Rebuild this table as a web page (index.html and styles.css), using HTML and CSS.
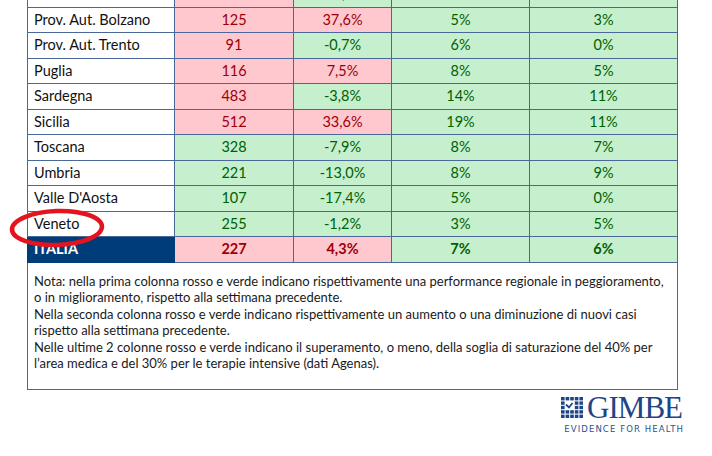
FILE: index.html
```html
<!DOCTYPE html>
<html lang="it">
<head>
<meta charset="utf-8">
<link rel="stylesheet" href="styles.css">
</head>
<body>
<div class="page">
  <table class="data">
    <colgroup>
      <col class="c1"><col class="c2"><col class="c3"><col class="c4"><col class="c5">
    </colgroup>
    <tbody>
      <tr><td class="name">Piemonte</td><td class="bad">81</td><td class="good">-16,1%</td><td class="good">2%</td><td class="good">1%</td></tr>
      <tr><td class="name">Prov. Aut. Bolzano</td><td class="bad">125</td><td class="bad">37,6%</td><td class="good">5%</td><td class="good">3%</td></tr>
      <tr><td class="name">Prov. Aut. Trento</td><td class="bad">91</td><td class="good">-0,7%</td><td class="good">6%</td><td class="good">0%</td></tr>
      <tr><td class="name">Puglia</td><td class="bad">116</td><td class="bad">7,5%</td><td class="good">8%</td><td class="good">5%</td></tr>
      <tr><td class="name">Sardegna</td><td class="bad">483</td><td class="good">-3,8%</td><td class="good">14%</td><td class="good">11%</td></tr>
      <tr><td class="name">Sicilia</td><td class="bad">512</td><td class="bad">33,6%</td><td class="good">19%</td><td class="good">11%</td></tr>
      <tr><td class="name">Toscana</td><td class="good">328</td><td class="good">-7,9%</td><td class="good">8%</td><td class="good">7%</td></tr>
      <tr><td class="name">Umbria</td><td class="good">221</td><td class="good">-13,0%</td><td class="good">8%</td><td class="good">9%</td></tr>
      <tr><td class="name">Valle D'Aosta</td><td class="good">107</td><td class="good">-17,4%</td><td class="good">5%</td><td class="good">0%</td></tr>
      <tr><td class="name veneto">Veneto<svg class="circle" width="100" height="44" viewBox="0 0 100 44"><ellipse cx="50" cy="22" rx="45" ry="17" fill="none" stroke="#e3141d" stroke-width="4.5" transform="rotate(-2 50 22)"/></svg></td><td class="good">255</td><td class="good">-1,2%</td><td class="good">3%</td><td class="good">5%</td></tr>
      <tr class="total"><td class="name italia">ITALIA</td><td class="bad">227</td><td class="bad">4,3%</td><td class="good">7%</td><td class="good">6%</td></tr>
    </tbody>
  </table>
  <div class="note">
    <p>Nota: nella prima colonna rosso e verde indicano rispettivamente una performance regionale in peggioramento, o in miglioramento, rispetto alla settimana precedente.</p>
    <p>Nella seconda colonna rosso e verde indicano rispettivamente un aumento o una diminuzione di nuovi casi rispetto alla settimana precedente.</p>
    <p>Nelle ultime 2 colonne rosso e verde indicano il superamento, o meno, della soglia di saturazione del 40% per l’area medica e del 30% per le terapie intensive (dati Agenas).</p>
  </div>
  <div class="logo-row">
    <div class="logo">
      <div class="logo-top">
        <svg class="logo-icon" width="23" height="22" viewBox="0 0 23 22">
          <g fill="#1d4688">
            <rect x="0" y="0" width="3.6" height="3.4"/><rect x="4.6" y="0" width="3.6" height="3.4"/><rect x="9.2" y="0" width="3.6" height="3.4"/><rect x="13.8" y="0" width="3.6" height="3.4"/><rect x="18.4" y="0" width="3.6" height="3.4"/>
            <rect x="0" y="4.4" width="3.6" height="3.4"/><rect x="13.8" y="4.4" width="3.6" height="3.4"/><rect x="18.4" y="4.4" width="3.6" height="3.4"/>
            <rect x="0" y="8.8" width="3.6" height="3.4"/><rect x="13.8" y="8.8" width="3.6" height="3.4"/><rect x="18.4" y="8.8" width="3.6" height="3.4"/>
            <rect x="0" y="13.2" width="3.6" height="3.4"/><rect x="4.6" y="13.2" width="3.6" height="3.4"/><rect x="9.2" y="13.2" width="3.6" height="3.4"/><rect x="13.8" y="13.2" width="3.6" height="3.4"/><rect x="18.4" y="13.2" width="3.6" height="3.4"/>
            <rect x="0" y="17.6" width="3.6" height="3.4"/><rect x="4.6" y="17.6" width="3.6" height="3.4"/><rect x="9.2" y="17.6" width="3.6" height="3.4"/><rect x="13.8" y="17.6" width="3.6" height="3.4"/><rect x="18.4" y="17.6" width="3.6" height="3.4"/>
          </g>
          <path d="M5 7.5 L8 10.5 L11.5 6" fill="none" stroke="#1d4688" stroke-width="1.8"/>
        </svg>
        <span class="logo-word">GIMBE</span>
      </div>
      <div class="logo-tag">EVIDENCE FOR HEALTH</div>
    </div>
  </div>
</div>
</body>
</html>
```
FILE: styles.css
```css
html, body {
  margin: 0;
  padding: 0;
  background: #ffffff;
}
body {
  width: 712px;
  height: 456px;
  overflow: hidden;
  font-family: Lato, "Open Sans", sans-serif;
}
.page {
  padding-left: 27px;
  width: 650px;
}
.data {
  border-collapse: collapse;
  table-layout: fixed;
  width: 651px;
  margin-top: -19px;
  font-size: 14.5px;
}
.c1 { width: 147px; }
.c2 { width: 119px; }
.c3 { width: 98px; }
.c4 { width: 138px; }
.c5 { width: 148px; }
.data tr {
  height: 25.5px;
}
.data td {
  border: 1px solid #48699a;
  padding: 0 6px;
  text-align: center;
  line-height: 18px;
  white-space: nowrap;
}
.data td.name {
  text-align: left;
  color: #111111;
  background: #ffffff;
}
.data td.bad {
  background: #ffc7ce;
  color: #9c0006;
}
.data td.good {
  background: #c6efce;
  color: #006100;
}
.total td {
  font-weight: 700;
}
.data td.italia {
  background: #003c78;
  color: #ffffff;
  border-color: #003c78;
  line-height: 18px;
}
.veneto {
  position: relative;
}
.circle {
  position: absolute;
  left: -21px;
  top: -6px;
}
.note {
  box-sizing: border-box;
  width: 651px;
  height: 127px;
  border: 1px solid #48699a;
  border-top: none;
  padding: 10px 6px 0 6px;
  font-size: 13px;
  line-height: 16.6px;
  color: #1a1a1a;
}
.note p {
  margin: 0;
}
.logo-row {
  display: flex;
  justify-content: flex-end;
  width: 656px;
  margin-top: 5px;
}
.logo {
  display: flex;
  flex-direction: column;
  align-items: flex-end;
}
.logo-top {
  display: flex;
  align-items: flex-end;
  gap: 3px;
  height: 26px;
}
.logo-icon {
  margin-bottom: 2px;
}
.logo-word {
  font-family: "Liberation Serif", serif;
  font-size: 31px;
  line-height: 26px;
  height: 26px;
  color: #1d4688;
  letter-spacing: -1px;
  margin-right: 1px;
}
.logo-tag {
  margin-top: 3px;
  font-family: "DejaVu Sans", sans-serif;
  font-size: 8.5px;
  line-height: 10px;
  letter-spacing: 1.1px;
  color: #2a5490;
  margin-right: -1.1px;
}
```
